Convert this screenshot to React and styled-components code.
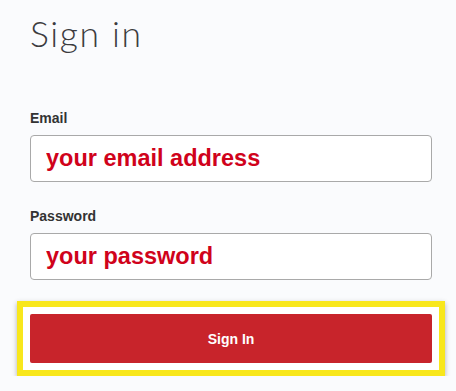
import styled, { createGlobalStyle } from "styled-components";

const GlobalStyle = createGlobalStyle`
  body {
    margin: 0;
    background: #fafbfd;
    font-family: "Liberation Sans", Arial, sans-serif;
  }
`;

const App = () => {
  return (
    <>
      <GlobalStyle />
      <Page>
        <Title>Sign in</Title>
        <Form>
          <Field>
            <Label>Email</Label>
            <Input type="email" placeholder="your email address" />
          </Field>
          <Field>
            <Label>Password</Label>
            <Input type="password" placeholder="your password" />
          </Field>
          <Highlight>
            <SubmitButton type="button">Sign In</SubmitButton>
          </Highlight>
        </Form>
      </Page>
    </>
  );
};

const Page = styled.div`
  padding: 12px 24px 0 30px;
  width: 402px;
`;

const Title = styled.h1`
  margin: 0;
  font-family: "Lato", "Open Sans", sans-serif;
  font-weight: 300;
  font-size: 35.5px;
  line-height: 44px;
  color: #3c3c3f;
  letter-spacing: 1.6px;
`;

const Form = styled.form`
  display: flex;
  flex-direction: column;
  gap: 26px;
  margin-top: 54px;
`;

const Field = styled.div`
  display: flex;
  flex-direction: column;
`;

const Label = styled.label`
  font-size: 14px;
  font-weight: bold;
  line-height: 16px;
  color: #333;
  margin-bottom: 9px;
`;

const Input = styled.input`
  box-sizing: border-box;
  width: 402px;
  height: 47px;
  padding: 0 15px;
  border: 1px solid #a9a9a9;
  border-radius: 4px;
  background: #fff;
  font-family: "Liberation Sans", Arial, sans-serif;
  font-size: 23.5px;
  font-weight: bold;
  outline: none;
  &::placeholder {
    color: #d0021b;
    opacity: 1;
  }
`;

const Highlight = styled.div`
  margin: -5px -13px 0 -13px;
  padding: 7px;
  border: 6px solid #f8e71c;
  background: #fff;
  box-shadow: 0 2px 5px rgba(0, 0, 0, 0.3);
`;

const SubmitButton = styled.button`
  display: block;
  width: 100%;
  height: 49px;
  border: none;
  border-radius: 2px;
  background: #c8242b;
  color: #fff;
  font-family: "Liberation Sans", Arial, sans-serif;
  font-size: 14px;
  font-weight: bold;
  cursor: pointer;
`;

export default App;
